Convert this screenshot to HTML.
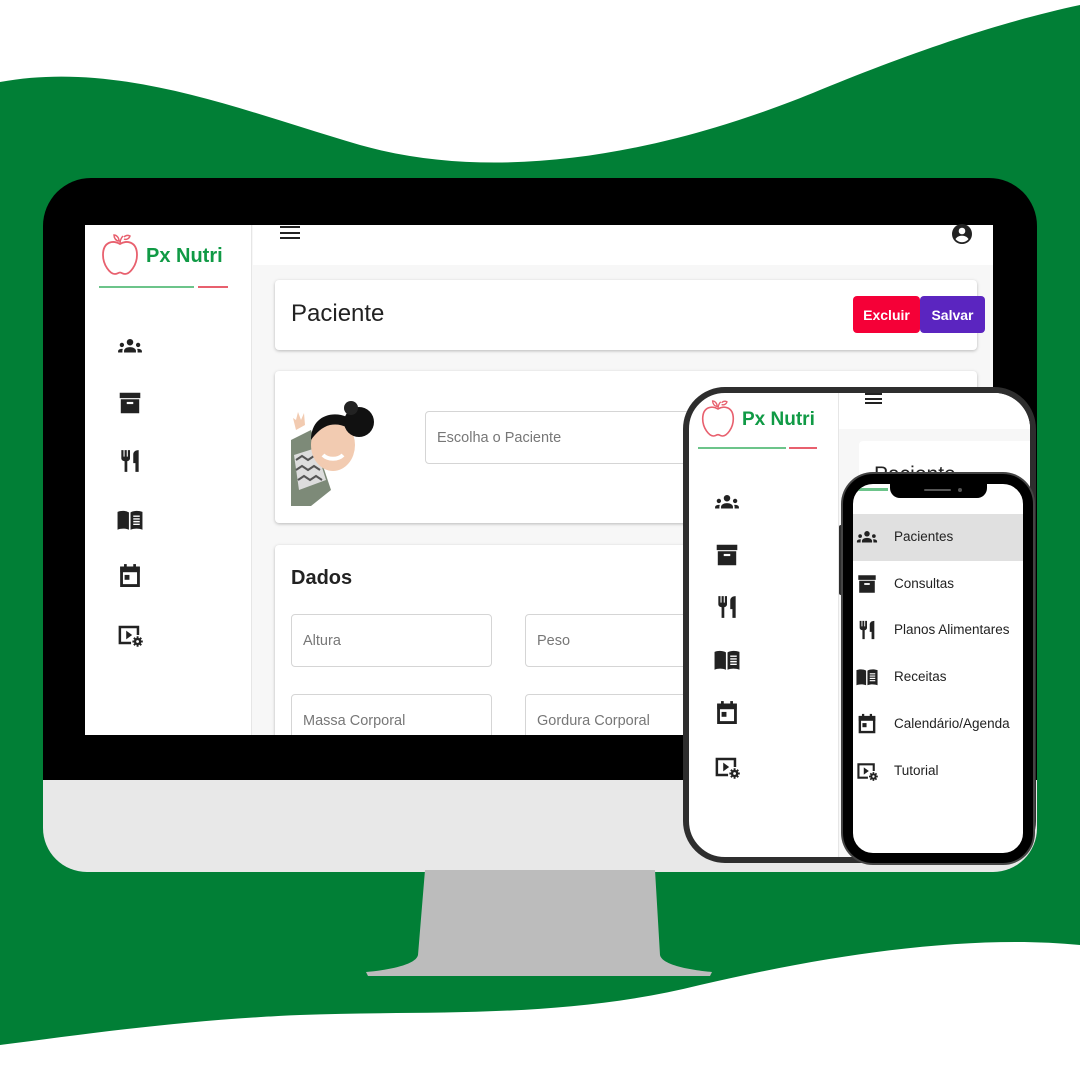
<!DOCTYPE html>
<html><head><meta charset="utf-8"><style>
*{margin:0;padding:0;box-sizing:border-box}
body{width:1080px;height:1080px;overflow:hidden;background:#fff;font-family:"Liberation Sans",sans-serif;position:relative}
.a{position:absolute}
.ic{position:absolute;width:26px;height:26px}
.card{position:absolute;background:#fff;border-radius:4px;box-shadow:0 1px 3px rgba(0,0,0,.25)}
.inp{position:absolute;border:1px solid #d5d5d5;border-radius:4px;color:#777;font-size:14.5px;padding-left:11px;display:flex;align-items:center;background:#fff}
.mi{position:absolute;left:894px;font-size:13.5px;color:#222}
</style></head><body>
<svg width="0" height="0" style="position:absolute">
<defs>
<symbol id="grp" viewBox="0 0 24 24"><circle cx="12" cy="8.5" r="3" fill="#222"/><path d="M6.5 18v-1.5c0-2 2.5-3.5 5.5-3.5s5.5 1.5 5.5 3.5V18z" fill="#222"/><circle cx="4.5" cy="11" r="2" fill="#222"/><circle cx="19.5" cy="11" r="2" fill="#222"/><path d="M1 18v-1.2c0-1.2 1.2-2.2 3.5-2.2l1 .1c-.4.6-.5 1.2-.5 1.8V18zM23 18v-1.2c0-1.2-1.2-2.2-3.5-2.2l-1 .1c.4.6.5 1.2.5 1.8V18z" fill="#222"/></symbol>
<symbol id="arc" viewBox="0 0 24 24"><path d="M2.5 2.5h19v5h-19zM3.5 8.5h17v13h-17z" fill="#222"/><rect x="9" y="11" width="6" height="2" fill="#fff"/></symbol>
<symbol id="rst" viewBox="0 0 24 24"><path d="M4 2h2v6h1V2h2v6h1V2h2v7.5c0 1.5-1.2 2.5-2.5 2.7V22H7V12.2C5.2 12 4 11 4 9.5zM15 14V6c0-2 1.5-4 5-4v20h-3v-8z" fill="#222"/></symbol>
<symbol id="bk" viewBox="0 0 24 24"><path d="M0.5 4.5c2.5-1 7-1.5 10.5.5V21c-3.5-1.5-8-1.2-10.5 0zM12.5 5c3.5-2 8-1.5 11-.5V21c-2.8-1.2-7.5-1.5-11 0z" fill="#222"/><path d="M15 8.5h6M15 11h6M15 13.5h6M15 16h6" stroke="#fff" stroke-width="1.3"/></symbol>
<symbol id="cal" viewBox="0 0 24 24"><path d="M4.2 4.5h15.6v16.3H4.2z" fill="none" stroke="#222" stroke-width="2.6"/><rect x="3" y="3.5" width="18" height="5" fill="#222"/><rect x="6.5" y="1" width="2.5" height="4" fill="#222"/><rect x="15" y="1" width="2.5" height="4" fill="#222"/><rect x="7" y="11" width="4.5" height="4.5" fill="#222"/></symbol>
<symbol id="vid" viewBox="0 0 24 24"><path d="M1.5 3.5h19v8.5h-2.3V5.8H3.8v12.4H13v2.3H1.5z" fill="#222"/><path d="M8.5 8v8l5.5-4z" fill="#222"/><path d="M19 13.2v9.6M14.2 18h9.6M15.6 14.6l6.8 6.8M22.4 14.6l-6.8 6.8" stroke="#222" stroke-width="1.8"/><circle cx="19" cy="18" r="3.4" fill="#222"/><circle cx="19" cy="18" r="1.3" fill="#fff"/></symbol>
<symbol id="apple" viewBox="0 0 40 44"><path d="M20 12c-6-4-17-3-17 11 0 10 7 19 12 19 3 0 3-1.5 5-1.5s2 1.5 5 1.5c5 0 12-9 12-19 0-14-11-15-17-11z" fill="none" stroke="#e8606e" stroke-width="1.8"/><path d="M20 12c0-4 1-6 3-8M14 3c2 0 5 2 5 6-3 0-5-3-5-6zM24 5c2-2 4-2 6-1-1 3-4 4-6 3" fill="none" stroke="#e8606e" stroke-width="1.5"/></symbol>
</defs></svg>

<svg class="a" style="left:0;top:0" width="1080" height="1080"><path d="M0 82 C120 60 240 110 360 145 C520 190 700 140 820 90 C930 45 1010 20 1080 5 L1080 945 C980 935 850 950 700 985 C560 1020 420 1010 300 1015 C180 1020 80 1035 0 1045 Z" fill="#017f36"/></svg>

<div class="a" style="left:43px;top:178px;width:994px;height:620px;background:#000;border-radius:48px 48px 0 0"></div>
<div class="a" style="left:43px;top:780px;width:994px;height:92px;background:#e8e8e8;border-radius:0 0 44px 44px"></div>
<svg class="a" style="left:360px;top:870px" width="360" height="110"><path d="M65 0H295L300 85C302 95 330 100 352 102L350 106H8L6 102C28 100 56 95 58 85Z" fill="#bcbcbc"/></svg>

<div class="a" style="left:85px;top:225px;width:908px;height:510px;background:#f7f7f7;overflow:hidden">
 <div class="a" style="left:0;top:0;width:167px;height:510px;background:#fff;border-right:1px solid #e6e6e6"></div>
 <div class="a" style="left:168px;top:0;width:740px;height:40px;background:#fff"></div>
</div>
<svg class="a" style="left:100px;top:230px" width="40" height="48"><use href="#apple"/></svg>
<div class="a" style="left:146px;top:245px;font-size:20px;color:#109a45;font-weight:bold">Px Nutri</div>
<div class="a" style="left:99px;top:286px;width:95px;height:2px;background:#6cc48a"></div>
<div class="a" style="left:198px;top:286px;width:30px;height:2px;background:#e8606e"></div>
<svg class="ic" style="left:117px;top:333px"><use href="#grp"/></svg>
<svg class="ic" style="left:117px;top:390px"><use href="#arc"/></svg>
<svg class="ic" style="left:117px;top:448px"><use href="#rst"/></svg>
<svg class="ic" style="left:117px;top:507px"><use href="#bk"/></svg>
<svg class="ic" style="left:117px;top:563px"><use href="#cal"/></svg>
<svg class="ic" style="left:117px;top:622px"><use href="#vid"/></svg>
<div class="a" style="left:280px;top:226px;width:20px;height:13px;border-top:2px solid #222;border-bottom:2px solid #222"><div style="margin-top:3.5px;height:2px;background:#222"></div></div>
<svg class="a" style="left:950px;top:222px" width="24" height="24"><circle cx="12" cy="12" r="10" fill="#222"/><circle cx="12" cy="9" r="3.3" fill="#fff"/><path d="M5.5 17c1.5-2.5 4-3.3 6.5-3.3s5 .8 6.5 3.3c-1.5 2-4 3.2-6.5 3.2s-5-1.2-6.5-3.2z" fill="#fff"/></svg>

<div class="card" style="left:275px;top:280px;width:702px;height:70px"></div>
<div class="a" style="left:291px;top:300px;font-size:24px;color:#222">Paciente</div>
<div class="a" style="left:853px;top:296px;width:67px;height:37px;background:#f50037;border-radius:4px;color:#fff;font-size:14px;font-weight:bold;display:flex;align-items:center;justify-content:center">Excluir</div>
<div class="a" style="left:920px;top:296px;width:65px;height:37px;background:#5b25c0;border-radius:4px;color:#fff;font-size:14px;font-weight:bold;display:flex;align-items:center;justify-content:center">Salvar</div>

<div class="card" style="left:275px;top:371px;width:702px;height:152px"></div>
<svg class="a" style="left:291px;top:400px" width="92" height="106">
<path d="M0 40 L20 30 L30 60 L40 90 L20 106 L0 106Z" fill="#7d8a78"/>
<path d="M3 55 L25 48 L35 80 L8 90Z" fill="#ddd"/>
<path d="M5 60l6-4 6 4 6-4 6 4M5 70l6-4 6 4 6-4 6 4M7 80l6-4 6 4 6-4 6 4" stroke="#555" stroke-width="2" fill="none"/>
<ellipse cx="42" cy="45" rx="22" ry="26" fill="#f2cbb1"/>
<path d="M20 40c0-20 15-28 30-25 10 2 15 10 14 20-5-8-15-12-25-10-8 2-14 8-19 15z" fill="#111"/>
<circle cx="68" cy="22" r="15" fill="#111"/>
<circle cx="60" cy="8" r="7" fill="#222"/>
<path d="M32 55c5 5 15 5 20 0" stroke="#fff" stroke-width="4" fill="none"/>
<path d="M5 30l-3-12 3 2 2-8 3 8 3-7 1 12z" fill="#f2cbb1"/>
</svg>
<div class="inp" style="left:425px;top:411px;width:290px;height:53px">Escolha o Paciente</div>

<div class="card" style="left:275px;top:545px;width:702px;height:200px"></div>
<div class="a" style="left:291px;top:567px;font-size:20px;font-weight:bold;color:#222">Dados</div>
<div class="inp" style="left:291px;top:614px;width:201px;height:53px">Altura</div>
<div class="inp" style="left:525px;top:614px;width:180px;height:53px">Peso</div>
<div class="inp" style="left:291px;top:694px;width:201px;height:53px;align-items:flex-start;padding-top:18px">Massa Corporal</div>
<div class="inp" style="left:525px;top:694px;width:180px;height:53px;align-items:flex-start;padding-top:18px">Gordura Corporal</div>
<div class="a" style="left:85px;top:735px;width:908px;height:45px;background:#000"></div>

<div class="a" style="left:683px;top:387px;width:353px;height:476px;background:#fff;border:6px solid #2e2e2e;border-radius:42px;overflow:hidden">
 <div class="a" style="left:149px;top:0;width:200px;height:470px;background:#f7f7f7;border-left:1px solid #e6e6e6"></div>
 <div class="a" style="left:150px;top:0;width:200px;height:36px;background:#fff"></div>
 <div class="a" style="left:170px;top:48px;width:200px;height:80px;background:#fff;border-radius:4px"></div>
 <div class="a" style="left:185px;top:70px;font-size:21px;color:#222">Paciente</div>
</div>
<svg class="a" style="left:700px;top:396px" width="36" height="44"><use href="#apple"/></svg>
<div class="a" style="left:742px;top:409px;font-size:19px;color:#109a45;font-weight:bold">Px Nutri</div>
<div class="a" style="left:698px;top:447px;width:88px;height:2px;background:#6cc48a"></div>
<div class="a" style="left:789px;top:447px;width:28px;height:2px;background:#e8606e"></div>
<div class="a" style="left:865px;top:393px;width:17px;height:11px;border-top:2px solid #222;border-bottom:2px solid #222"><div style="margin-top:2.5px;height:2px;background:#222"></div></div>
<svg class="ic" style="left:714px;top:489px"><use href="#grp"/></svg>
<svg class="ic" style="left:714px;top:542px"><use href="#arc"/></svg>
<svg class="ic" style="left:714px;top:594px"><use href="#rst"/></svg>
<svg class="ic" style="left:714px;top:647px"><use href="#bk"/></svg>
<svg class="ic" style="left:714px;top:700px"><use href="#cal"/></svg>
<svg class="ic" style="left:714px;top:754px"><use href="#vid"/></svg>

<div class="a" style="left:839px;top:525px;width:5px;height:70px;background:#2e2e2e;border-radius:2px"></div>
<div class="a" style="left:843px;top:474px;width:190px;height:389px;background:#fff;border:10px solid #000;border-radius:30px;box-shadow:0 0 0 2px #444;overflow:hidden">
 <div class="a" style="left:0;top:30px;width:170px;height:47px;background:#e0e0e0"></div>
 <div class="a" style="left:0;top:4px;width:35px;height:3px;background:#6cc48a"></div>
</div>
<div class="a" style="left:890px;top:482px;width:97px;height:16px;background:#000;border-radius:0 0 10px 10px"></div>
<div class="a" style="left:924px;top:489px;width:27px;height:2px;background:#555;border-radius:1px"></div>
<div class="a" style="left:958px;top:488px;width:4px;height:4px;background:#555;border-radius:50%"></div>
<svg class="ic" style="left:856px;top:526px;width:22px;height:22px"><use href="#grp"/></svg>
<svg class="ic" style="left:856px;top:573px;width:22px;height:22px"><use href="#arc"/></svg>
<svg class="ic" style="left:856px;top:619px;width:22px;height:22px"><use href="#rst"/></svg>
<svg class="ic" style="left:856px;top:666px;width:22px;height:22px"><use href="#bk"/></svg>
<svg class="ic" style="left:856px;top:713px;width:22px;height:22px"><use href="#cal"/></svg>
<svg class="ic" style="left:856px;top:760px;width:22px;height:22px"><use href="#vid"/></svg>
<div class="mi" style="top:529px">Pacientes</div>
<div class="mi" style="top:576px">Consultas</div>
<div class="mi" style="top:622px">Planos Alimentares</div>
<div class="mi" style="top:669px">Receitas</div>
<div class="mi" style="top:716px">Calendário/Agenda</div>
<div class="mi" style="top:763px">Tutorial</div>
</body></html>
